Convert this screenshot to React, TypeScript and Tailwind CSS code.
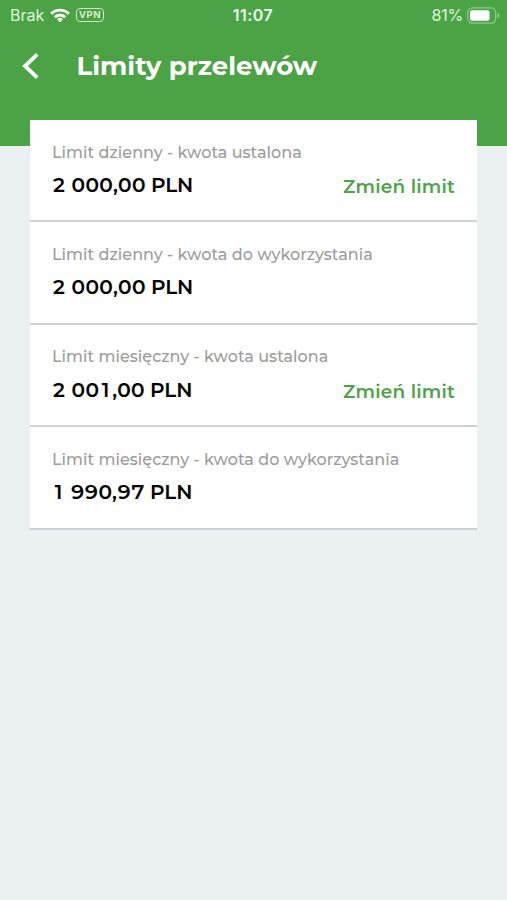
import React from 'react';

interface Limit {
  id: string;
  label: string;
  amount: string;
  editable: boolean;
}

const limits: Limit[] = [
  { id: 'daily', label: 'Limit dzienny - kwota ustalona', amount: '2 000,00 PLN', editable: true },
  { id: 'daily-left', label: 'Limit dzienny - kwota do wykorzystania', amount: '2 000,00 PLN', editable: false },
  { id: 'monthly', label: 'Limit miesięczny - kwota ustalona', amount: '2 001,00 PLN', editable: true },
  { id: 'monthly-left', label: 'Limit miesięczny - kwota do wykorzystania', amount: '1 990,97 PLN', editable: false },
];

function StatusBar() {
  return (
    <div className="grid grid-cols-3 items-center h-[30px] pl-[10px] pr-[7px] font-['Inter',sans-serif] text-[16px] leading-[30px] text-[#e0f5dc]">
      <div className="flex items-center">
        <span className="w-[34px]">Brak</span>
        <svg className="ml-[6px] w-5 h-[15px]" viewBox="0 0 20 15" fill="none" stroke="#f5fff3" strokeWidth="2.8">
          <path d="M1.2 5.7a12.4 12.4 0 0 1 17.6 0" />
          <path d="M4.7 9.2a7.5 7.5 0 0 1 10.6 0" />
          <path d="M10 14.3l-3-3a4.3 4.3 0 0 1 6 0z" fill="#f5fff3" stroke="none" />
        </svg>
        <span className="ml-[6px] flex items-center justify-center w-7 h-[14px] rounded-[4px] border-[1.5px] border-[#c9eac5] text-[9.5px] leading-none font-semibold tracking-[0.5px]">
          VPN
        </span>
      </div>
      <span className="pr-1 text-center font-semibold tracking-[0.45px] text-[#effced]">11:07</span>
      <div className="flex items-center justify-end">
        <span className="tracking-[-0.2px]">81%</span>
        <svg className="ml-[4px] w-[33px] h-[17px]" viewBox="0 0 33 17" fill="none">
          <rect x="0.7" y="0.9" width="28" height="15.2" rx="4.5" stroke="#8fcb8b" strokeWidth="1.3" />
          <rect x="3" y="3.3" width="19.5" height="10.5" rx="2" fill="#fff" />
          <path d="M30.5 5.8c2.4.8 2.4 4.6 0 5.4z" fill="#8fcb8b" />
        </svg>
      </div>
    </div>
  );
}

// The tabular "1" has a foot, so the plain one is centred in a digit-wide box
function Amount({ value }: { value: string }) {
  return (
    <p className="text-[20px] leading-[30px] font-semibold tabular-nums tracking-[-0.1px] text-black whitespace-pre">
      {value.split(/(1)/).map((part, i) =>
        part === '1' ? (
          <span key={i} className="inline-block w-[13px] text-center normal-nums">1</span>
        ) : (
          part
        )
      )}
    </p>
  );
}

function LimitRow({ limit }: { limit: Limit }) {
  return (
    <div className="h-[102.4px] px-[22px] pt-[20.5px] border-b-2 border-[#cdcfd9]">
      <p className="text-[16px] leading-6 font-medium tracking-[0.04px] text-[#9b9b9b] whitespace-nowrap">{limit.label}</p>
      <div className="flex items-center justify-between mt-[5.5px]">
        <Amount value={limit.amount} />
        {limit.editable && (
          <button className="pt-[3px] text-[18.5px] leading-[27px] font-semibold tracking-[0.2px] text-[#4ba346] whitespace-nowrap">
            Zmień limit
          </button>
        )}
      </div>
    </div>
  );
}

export default function App() {
  return (
    <div className="min-h-screen bg-[#ebf0f3] font-['Montserrat','Inter',sans-serif]">
      <header className="h-[146px] bg-[#4ba346]">
        <StatusBar />
        <div className="flex items-center h-[72px] pl-[22px] text-white">
          <button aria-label="Wstecz">
            <svg className="w-[18px] h-7" viewBox="0 0 18 28" fill="none" stroke="currentColor" strokeWidth="3.8">
              <path d="M15.2 2.4L3 14l12.2 11.6" />
            </svg>
          </button>
          <h1 className="ml-[36.5px] text-[26px] leading-9 font-bold whitespace-nowrap">Limity przelewów</h1>
        </div>
      </header>
      <main className="relative -mt-[26px] mx-[30px] bg-white">
        {limits.map(limit => (
          <LimitRow key={limit.id} limit={limit} />
        ))}
      </main>
    </div>
  );
}
